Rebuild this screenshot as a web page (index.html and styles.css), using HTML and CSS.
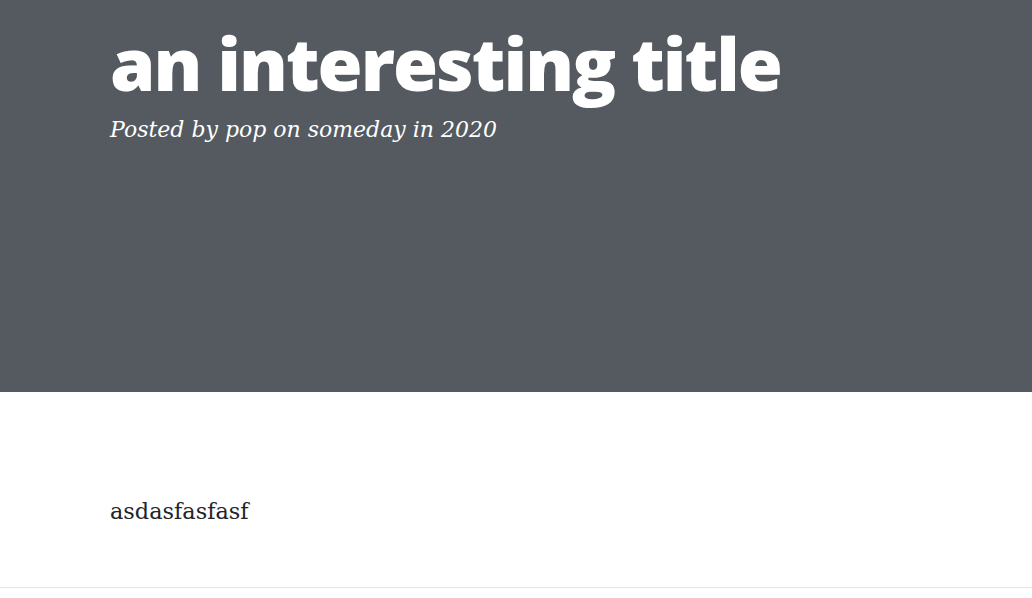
FILE: index.html
```html
<!DOCTYPE html>
<html>
<head>
<meta charset="utf-8">
<link rel="stylesheet" href="styles.css">
</head>
<body>
<header class="masthead">
  <div class="inner">
    <h1 class="title">an interesting title</h1>
    <div class="meta">Posted by pop on someday in 2020</div>
  </div>
</header>
<main class="content">
  <p class="text">asdasfasfasf</p>
</main>
<hr class="rule">
</body>
</html>
```
FILE: styles.css
```css
html, body {
  margin: 0;
  padding: 0;
  background: #fff;
}
.masthead {
  background: #545a60;
  height: 392px;
  box-sizing: border-box;
  padding: 15px 0 0 110px;
  color: #fff;
}
.title {
  margin: 0;
  font-family: "Open Sans", sans-serif;
  font-weight: 800;
  font-size: 73px;
  letter-spacing: -2px;
  line-height: 96px;
}
.meta {
  margin-top: 4px;
  font-family: "DejaVu Serif", serif;
  font-style: italic;
  font-size: 22px;
  line-height: 30px;
}
.content {
  padding: 0 0 0 110px;
  height: 195px;
  box-sizing: border-box;
  padding-top: 103px;
}
.text {
  margin: 0;
  font-family: "DejaVu Serif", serif;
  font-size: 22.4px;
  line-height: 32px;
  color: #212529;
}
.rule {
  margin: 0;
  border: 0;
  border-top: 1px solid #e6e6e6;
}
```
